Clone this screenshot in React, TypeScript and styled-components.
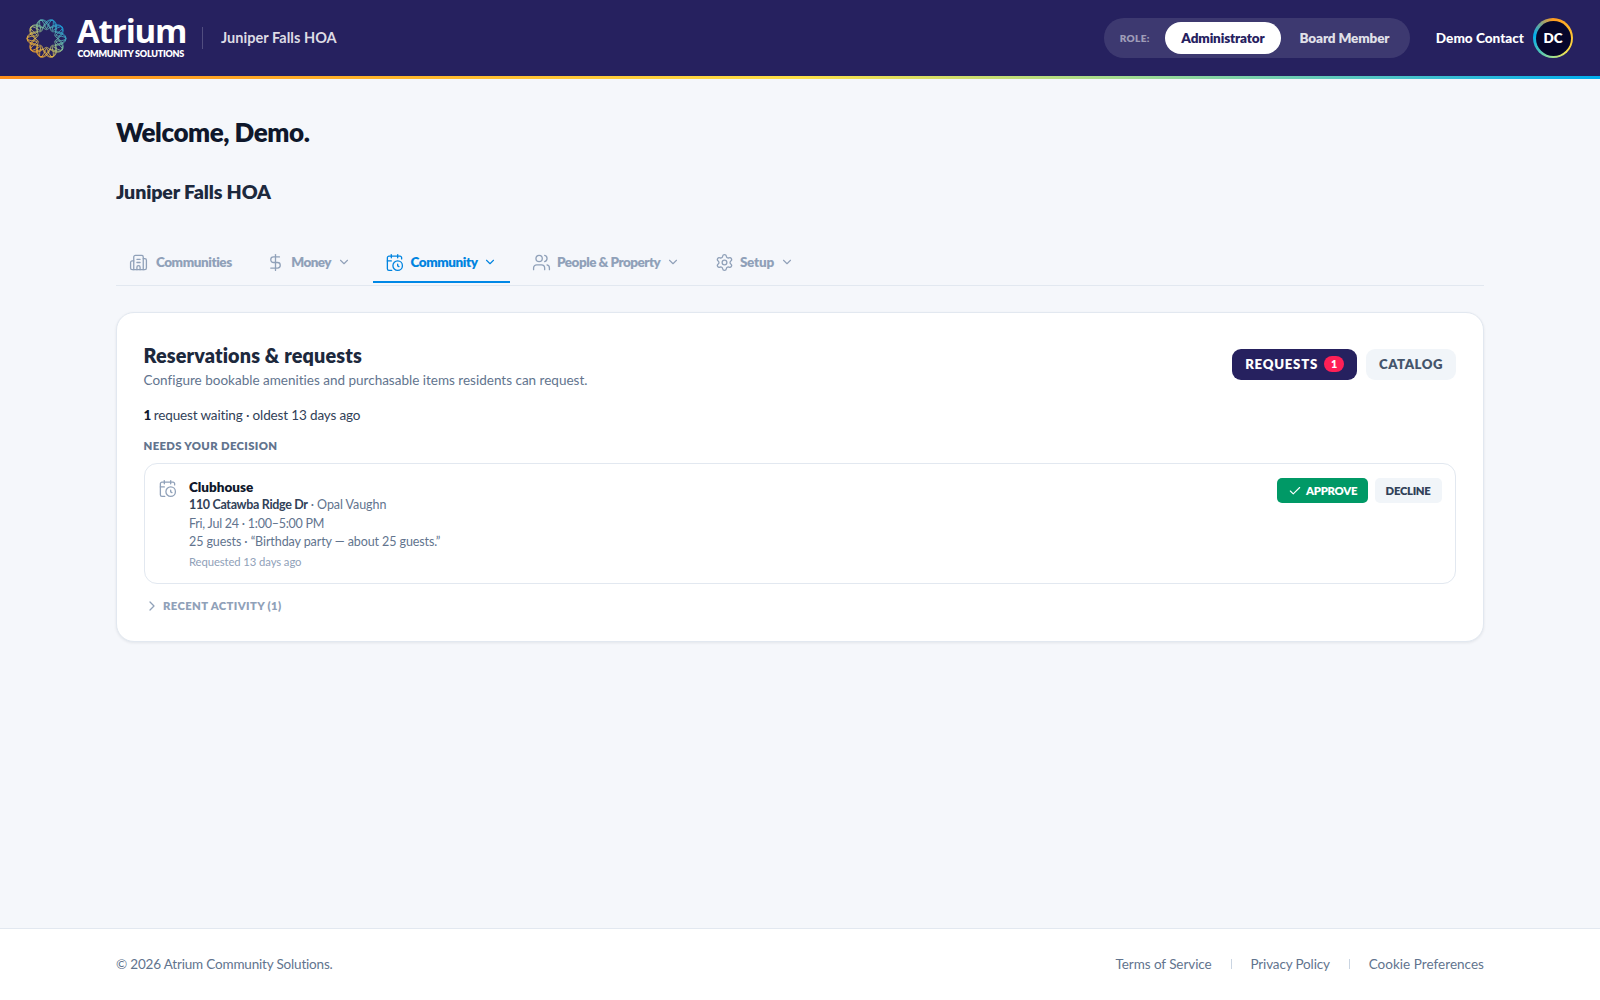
import React from 'react';
import styled, { createGlobalStyle } from 'styled-components';
import {
  Building2,
  CalendarClock,
  Check,
  ChevronDown,
  ChevronRight,
  DollarSign,
  Settings,
  Users,
} from 'lucide-react';

const navy = '#26215f';
const slate = {
  100: '#f1f5f9',
  200: '#e2e8f0',
  400: '#90a1b9',
  500: '#62748e',
  600: '#45556c',
  700: '#314158',
  800: '#1d293d',
  900: '#0f172b',
};

const GlobalStyle = createGlobalStyle`
  *, *::before, *::after { box-sizing: border-box; }
  body {
    margin: 0;
    background: #f5f7fb;
    color: ${slate[900]};
    font-family: Lato, "Liberation Sans", sans-serif;
    font-variant-ligatures: none;
    -webkit-font-smoothing: antialiased;
  }
  h1, h2, h3, p { margin: 0; }
  button { font-family: inherit; border: 0; padding: 0; margin: 0; background: none; }
`;

const Page = styled.div`
  min-height: 1000px;
  display: flex;
  flex-direction: column;
`;

const Header = styled.header`
  height: 76px;
  padding: 0 27px 0 26px;
  background: ${navy};
  display: flex;
  align-items: center;
  justify-content: space-between;
`;

const Rainbow = styled.div`
  height: 3px;
  background: linear-gradient(90deg, #ff8f1c 0%, #ffb62a 25%, #fde047 50%, #a3dc90 70%, #4cc4c8 87%, #00aeef 100%);
`;

const Brand = styled.div`
  display: flex;
  align-items: center;
`;

const Wordmark = styled.div`
  margin-left: 10px;
  width: 109px;
  padding-bottom: 3px;
  color: #fff;
  white-space: nowrap;
`;

const WordmarkName = styled.div`
  font: 700 33px/34px "Open Sans", "Noto Sans", sans-serif;
  letter-spacing: -1.15px;
`;

const WordmarkTag = styled.div`
  padding-left: 0.5px;
  font-size: 9px;
  line-height: 11px;
  font-weight: 800;
  letter-spacing: -0.25px;
`;

const BrandDivider = styled.div`
  width: 1px;
  height: 22px;
  margin: 0 18px 0 16px;
  background: rgba(255, 255, 255, 0.2);
`;

const CommunityName = styled.div`
  padding-bottom: 1px;
  font-size: 14.5px;
  font-weight: 700;
  letter-spacing: 0.04px;
  color: rgba(255, 255, 255, 0.85);
`;

const Account = styled.div`
  display: flex;
  align-items: center;
`;

const RoleSwitch = styled.div`
  height: 40px;
  width: 306px;
  padding: 4px;
  border-radius: 20px;
  background: rgba(255, 255, 255, 0.11);
  display: flex;
  align-items: center;
`;

const RoleLabel = styled.span`
  flex: none;
  width: 57.5px;
  padding-left: 12px;
  font-size: 10px;
  font-weight: 800;
  letter-spacing: 0.35px;
  color: rgba(255, 255, 255, 0.52);
`;

const RoleButton = styled.button<{ $active?: boolean }>`
  flex: none;
  height: 32px;
  padding: 0 16px;
  margin-right: 3px;
  border-radius: 16px;
  font-size: 13.5px;
  font-weight: 800;
  letter-spacing: -0.13px;
  white-space: nowrap;
  background: ${(p) => (p.$active ? '#fff' : 'transparent')};
  color: ${(p) => (p.$active ? navy : 'rgba(255, 255, 255, 0.86)')};

  &:last-child {
    margin-right: 0;
  }
`;

const UserName = styled.span`
  margin: 0 9px 0 26px;
  font-size: 13.6px;
  font-weight: 900;
  color: #fff;
`;

const AvatarRing = styled.div`
  width: 40px;
  height: 40px;
  padding: 2.5px;
  border-radius: 50%;
  background: conic-gradient(#ff9a1f 0deg, #ffb62a 60deg, #fde047 130deg, #a0e090 180deg, #4cc4b8 225deg, #00aeef 280deg, #ff9a1f 360deg);
`;

const Avatar = styled.div`
  height: 100%;
  border-radius: 50%;
  background: #07062b;
  color: #fff;
  font-size: 13.5px;
  font-weight: 800;
  display: flex;
  align-items: center;
  justify-content: center;
`;

const Main = styled.main`
  flex: 1;
  padding: 37px 116px 0;
`;

const Welcome = styled.h1`
  font-size: 26px;
  line-height: 32px;
  font-weight: 800;
  letter-spacing: -0.45px;
`;

const Association = styled.h2`
  margin-top: 30px;
  font-size: 19.6px;
  line-height: 28px;
  font-weight: 800;
  letter-spacing: -0.15px;
  color: ${slate[800]};
`;

const Tabs = styled.nav`
  margin-top: 36px;
  height: 44px;
  border-bottom: 1.5px solid ${slate[200]};
  display: flex;
  align-items: flex-start;
  gap: 9.3px;
`;

const Tab = styled.button<{ $active?: boolean; $gap?: number; $spacing?: number }>`
  height: 40.5px;
  padding: 2px 12.5px 0;
  border-bottom: 2px solid ${(p) => (p.$active ? '#0088e6' : 'transparent')};
  display: flex;
  align-items: center;
  gap: ${(p) => p.$gap ?? 6.3}px;
  color: ${(p) => (p.$active ? '#0084e0' : slate[400])};
  font-size: 13.5px;
  font-weight: 800;
  letter-spacing: ${(p) => p.$spacing ?? -0.43}px;
  white-space: nowrap;

  svg:last-child:not(:first-child) {
    margin-left: -0.4px;
  }
`;

const Card = styled.section`
  margin-top: 26px;
  height: 330px;
  padding: 28px 27px 27px 26.5px;
  border: 1px solid ${slate[200]};
  border-radius: 18px;
  background: #fff;
  box-shadow: 0 1px 3px rgba(15, 23, 43, 0.08);
`;

const CardHeader = styled.div`
  display: flex;
  justify-content: space-between;
  align-items: flex-start;
`;

const CardTitle = styled.h3`
  font-size: 19.8px;
  line-height: 28px;
  font-weight: 800;
  letter-spacing: 0.14px;
  color: ${slate[800]};
`;

const CardSubtitle = styled.p`
  margin-top: 1px;
  font-size: 13.5px;
  line-height: 20px;
  color: ${slate[500]};
`;

const ViewSwitch = styled.div`
  margin-top: 8px;
  display: flex;
  gap: 9px;
`;

const ViewButton = styled.button<{ $active?: boolean }>`
  height: 31px;
  padding: 0 13px 1px;
  border-radius: 9px;
  display: flex;
  align-items: center;
  gap: 6.5px;
  font-size: 13.2px;
  font-weight: 800;
  letter-spacing: ${(p) => (p.$active ? 0.74 : 0.5)}px;
  background: ${(p) => (p.$active ? navy : slate[100])};
  color: ${(p) => (p.$active ? '#fff' : slate[600])};
`;

const Count = styled.span`
  width: 19.5px;
  height: 16px;
  border-radius: 8px;
  background: #ff2056;
  color: #fff;
  font-size: 10.8px;
  line-height: 16px;
  letter-spacing: 0;
  text-align: center;
`;

const Summary = styled.p`
  margin-top: 15px;
  font-size: 13.5px;
  line-height: 20px;
  letter-spacing: -0.14px;
  color: ${slate[700]};

  strong {
    margin-right: -0.8px;
    font-weight: 900;
    color: ${slate[900]};
  }
`;

const SectionLabel = styled.h3`
  margin-top: 13px;
  font-size: 11.3px;
  line-height: 16px;
  font-weight: 800;
  letter-spacing: 0.36px;
  color: ${slate[500]};
`;

const Request = styled.article`
  margin-top: 9px;
  height: 121px;
  padding: 14px 13.5px 0 13px;
  border: 1px solid ${slate[200]};
  border-radius: 13px;
  display: flex;
  align-items: flex-start;
`;

const RequestIcon = styled.div`
  width: 31.5px;
  padding: 1px 0 0;
  color: ${slate[400]};
`;

const RequestBody = styled.div`
  flex: 1;
  font-size: 12.5px;
  line-height: 18px;
  color: ${slate[500]};
`;

const Amenity = styled.div`
  font-size: 13.5px;
  font-weight: 800;
  color: ${slate[900]};
`;

const Detail = styled.div<{ $spacing: number; $top?: number }>`
  margin-top: ${(p) => p.$top ?? 0}px;
  letter-spacing: ${(p) => p.$spacing}px;

  strong {
    font-weight: 700;
    letter-spacing: -0.33px;
    color: ${slate[700]};
  }
`;

const Requested = styled.div`
  margin-top: 2px;
  font-size: 11.3px;
  letter-spacing: -0.1px;
  color: ${slate[400]};
`;

const Actions = styled.div`
  display: flex;
  gap: 6.5px;
`;

const ActionButton = styled.button<{ $primary?: boolean }>`
  height: 25px;
  padding: 0 11px;
  border-radius: 5px;
  display: flex;
  align-items: center;
  gap: 4.5px;
  font-size: 11.3px;
  font-weight: 800;
  letter-spacing: -0.3px;
  background: ${(p) => (p.$primary ? '#009966' : slate[100])};
  color: ${(p) => (p.$primary ? '#fff' : slate[700])};
`;

const Recent = styled.button`
  margin-top: 14px;
  display: flex;
  align-items: center;
  gap: 3.5px;
  font-size: 11.3px;
  line-height: 16px;
  font-weight: 800;
  letter-spacing: 0.36px;
  color: ${slate[400]};
`;

const Footer = styled.footer`
  height: 72.5px;
  padding: 0 116px;
  border-top: 1px solid ${slate[200]};
  background: #fff;
  display: flex;
  align-items: center;
  justify-content: space-between;
  font-size: 13.5px;
  color: ${slate[500]};
`;

const Copyright = styled.span`
  letter-spacing: -0.18px;
`;

const Links = styled.div`
  display: flex;
  align-items: center;
  gap: 18.9px;
`;

const Link = styled.a<{ $spacing: number }>`
  letter-spacing: ${(p) => p.$spacing}px;
`;

const LinkDivider = styled.span`
  width: 1px;
  height: 10px;
  background: #cad5e2;
`;

/** One closed strand of the woven ring: the radius swings `lobes` times over `turns` turns. */
function strand(radius: number, swing: number, lobes: number, turns: number, phase: number) {
  const steps = 90 * turns;
  const points: string[] = [];
  for (let i = 0; i < steps; i++) {
    const t = (i / steps) * Math.PI * 2 * turns;
    const r = radius + swing * Math.cos((lobes / turns) * t);
    const a = t + phase;
    points.push(`${(20 + r * Math.cos(a)).toFixed(2)} ${(20 + r * Math.sin(a)).toFixed(2)}`);
  }
  return `M${points.join('L')}Z`;
}

function RingLogo() {
  return (
    <svg width="41" height="41" viewBox="0 0 40 40" fill="none" stroke="url(#ring)" strokeWidth="0.8">
      <defs>
        <linearGradient id="ring" x1="8" y1="34" x2="34" y2="8" gradientUnits="userSpaceOnUse">
          <stop offset="0" stopColor="#f7a52a" />
          <stop offset="0.3" stopColor="#e6c04c" />
          <stop offset="0.6" stopColor="#7fc4a0" />
          <stop offset="1" stopColor="#1c9fdc" />
        </linearGradient>
      </defs>
      <path d={strand(13.8, 5.2, 10, 3, 0)} />
      <path d={strand(14.2, 4.8, 10, 1, 0)} />
      <path d={strand(14.8, 3.8, 5, 1, 0)} />
      <path d={strand(14.8, 3.8, 5, 1, Math.PI / 5)} />
    </svg>
  );
}

const tabIcon = { size: 19, strokeWidth: 1.65 };
const chevron = { size: 14, strokeWidth: 1.9 };

export default function App() {
  return (
    <Page>
      <GlobalStyle />
      <Header>
        <Brand>
          <RingLogo />
          <Wordmark>
            <WordmarkName>Atrium</WordmarkName>
            <WordmarkTag>COMMUNITY SOLUTIONS</WordmarkTag>
          </Wordmark>
          <BrandDivider />
          <CommunityName>Juniper Falls HOA</CommunityName>
        </Brand>
        <Account>
          <RoleSwitch>
            <RoleLabel>ROLE:</RoleLabel>
            <RoleButton $active>Administrator</RoleButton>
            <RoleButton>Board Member</RoleButton>
          </RoleSwitch>
          <UserName>Demo Contact</UserName>
          <AvatarRing>
            <Avatar>DC</Avatar>
          </AvatarRing>
        </Account>
      </Header>
      <Rainbow />

      <Main>
        <Welcome>Welcome, Demo.</Welcome>
        <Association>Juniper Falls HOA</Association>

        <Tabs>
          <Tab $gap={8.4}>
            <Building2 {...tabIcon} />
            <span>Communities</span>
          </Tab>
          <Tab $spacing={-0.6}>
            <DollarSign {...tabIcon} />
            <span>Money</span>
            <ChevronDown {...chevron} />
          </Tab>
          <Tab $active>
            <CalendarClock {...tabIcon} />
            <span>Community</span>
            <ChevronDown {...chevron} />
          </Tab>
          <Tab $spacing={-0.52}>
            <Users {...tabIcon} />
            <span>People &amp; Property</span>
            <ChevronDown {...chevron} />
          </Tab>
          <Tab $spacing={-0.25}>
            <Settings {...tabIcon} />
            <span>Setup</span>
            <ChevronDown {...chevron} />
          </Tab>
        </Tabs>

        <Card>
          <CardHeader>
            <div>
              <CardTitle>Reservations &amp; requests</CardTitle>
              <CardSubtitle>
                Configure bookable amenities and purchasable items residents can request.
              </CardSubtitle>
            </div>
            <ViewSwitch>
              <ViewButton $active>
                REQUESTS <Count>1</Count>
              </ViewButton>
              <ViewButton>CATALOG</ViewButton>
            </ViewSwitch>
          </CardHeader>

          <Summary>
            <strong>1</strong> request waiting · oldest 13 days ago
          </Summary>
          <SectionLabel>NEEDS YOUR DECISION</SectionLabel>

          <Request>
            <RequestIcon>
              <CalendarClock {...tabIcon} />
            </RequestIcon>
            <RequestBody>
              <Amenity>Clubhouse</Amenity>
              <Detail $spacing={-0.07}>
                <strong>110 Catawba Ridge Dr</strong> · Opal Vaughn
              </Detail>
              <Detail $spacing={-0.24} $top={1}>
                Fri, Jul 24 · 1:00–5:00 PM
              </Detail>
              <Detail $spacing={-0.09}>25 guests · “Birthday party — about 25 guests.”</Detail>
              <Requested>Requested 13 days ago</Requested>
            </RequestBody>
            <Actions>
              <ActionButton $primary>
                <Check size={14} strokeWidth={1.9} />
                APPROVE
              </ActionButton>
              <ActionButton>DECLINE</ActionButton>
            </Actions>
          </Request>

          <Recent>
            <ChevronRight size={16} strokeWidth={1.9} />
            RECENT ACTIVITY (1)
          </Recent>
        </Card>
      </Main>

      <Footer>
        <Copyright>© 2026 Atrium Community Solutions.</Copyright>
        <Links>
          <Link $spacing={-0.07}>Terms of Service</Link>
          <LinkDivider />
          <Link $spacing={-0.14}>Privacy Policy</Link>
          <LinkDivider />
          <Link $spacing={0.03}>Cookie Preferences</Link>
        </Links>
      </Footer>
    </Page>
  );
}
